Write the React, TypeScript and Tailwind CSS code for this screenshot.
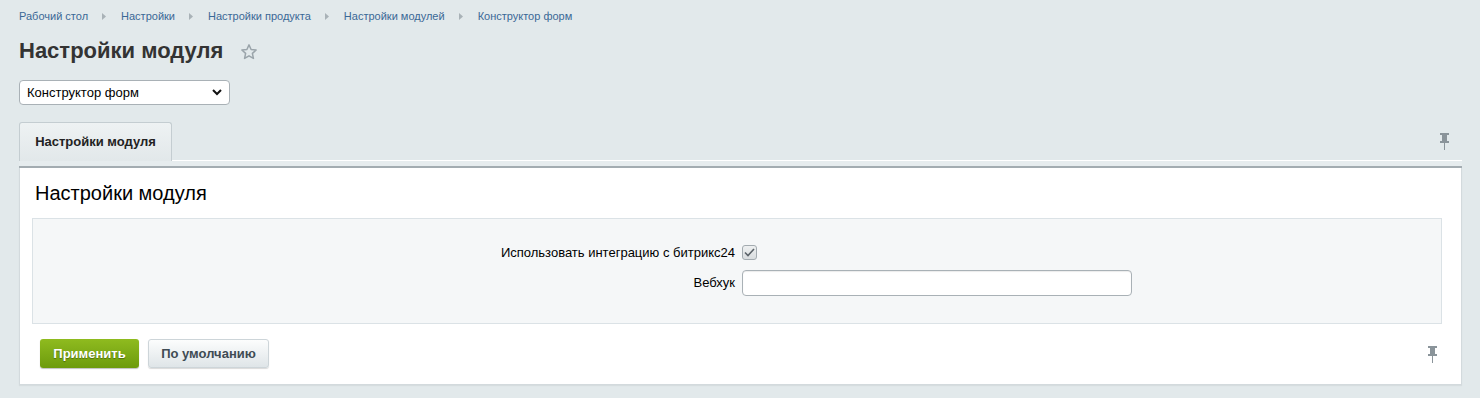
import React from "react";

const font = { fontFamily: '"Liberation Sans", Arial, sans-serif' };

function Pin() {
    return (
        <svg width="11" height="17" viewBox="0 0 11 17">
            <rect x="1" y="0" width="9" height="2" fill="#8a949a" />
            <rect x="3" y="2" width="5" height="6" fill="#8a949a" />
            <rect x="1" y="8" width="9" height="2" fill="#8a949a" />
            <rect x="5" y="10" width="1" height="7" fill="#8a949a" />
        </svg>
    );
}

function Crumb({ text, last }: { text: string; last?: boolean }) {
    return (
        <>
            <span className="text-[11px] text-[#3a6896]">{text}</span>
            {!last && (
                <svg width="4" height="7" viewBox="0 0 4 7" className="ml-[14px] mr-[15px]">
                    <path d="M0 0 L4 3.5 L0 7 Z" fill="#a9b2b7" />
                </svg>
            )}
        </>
    );
}

export default function App() {
    const crumbs = ["Рабочий стол", "Настройки", "Настройки продукта", "Настройки модулей", "Конструктор форм"];

    return (
        <div className="min-h-[398px] bg-[#e2e9eb] pl-[19px] pr-[18px] pt-[9px] text-[#333]" style={font}>
            {/* breadcrumbs */}
            <div className="flex items-center h-[14px]">
                {crumbs.map((c, i) => (
                    <Crumb key={c} text={c} last={i === crumbs.length - 1} />
                ))}
            </div>

            <div className="flex items-center mt-[15px] h-[25px]">
                <h1 className="text-[22px] font-bold text-[#333] leading-[25px]">Настройки модуля</h1>
                <svg width="18" height="18" viewBox="0 0 24 24" className="ml-[17px] mt-[2px]">
                    <path d="M12 2.5 L14.8 8.7 L21.5 9.4 L16.5 13.9 L17.9 20.5 L12 17.1 L6.1 20.5 L7.5 13.9 L2.5 9.4 L9.2 8.7 Z"
                          fill="none" stroke="#9aa4aa" strokeWidth="2" strokeLinejoin="round" />
                </svg>
            </div>

            <div className="relative mt-[17px] w-[211px] h-[25px]">
                <select className="appearance-none w-full h-full rounded-[4px] border border-[#a9b1b6] bg-white pl-[7px] text-[13px] text-black outline-none" style={font}>
                    <option>Конструктор форм</option>
                </select>
                <svg width="10" height="7" viewBox="0 0 10 7" className="absolute right-[8px] top-[9px] pointer-events-none">
                    <path d="M1 1 L5 5 L9 1" fill="none" stroke="#111" strokeWidth="2" />
                </svg>
            </div>

            {/* tabs */}
            <div className="flex items-end mt-[17px]">
                <div className="h-[39px] w-[153px] rounded-t-[3px] border border-b-0 border-[#c4cdd1] bg-gradient-to-b from-[#eef2f3] to-[#e2e8ea] flex items-center justify-center text-[13px] font-bold text-[#222]">
                    Настройки модуля
                </div>
                <div className="flex-1 h-[39px] border-b border-white flex items-center justify-end pr-[12px]">
                    <Pin />
                </div>
            </div>
            <div className="h-[7px] bg-[#e6ecee] border-b-2 border-[#a3acb1]"></div>

            {/* panel */}
            <div className="bg-white border border-t-0 border-[#d3dadd] pl-[12px] pr-[19px] pb-[16px] shadow-[0_1px_1px_rgba(0,0,0,0.05)]">
                <div className="pt-[13px] pl-[3px] text-[20px] leading-[24px] text-black">Настройки модуля</div>

                <div className="mt-[13px] bg-[#f5f7f8] border border-[#dbe2e6] pt-[24px] pb-[27px]">
                    <div className="grid grid-cols-2 items-center h-[15px]">
                        <div className="text-right pr-[2px] text-[13px] text-black">Использовать интеграцию с битрикс24</div>
                        <div className="pl-[5px]">
                            <div className="w-[15px] h-[15px] rounded-[3px] border border-[#a3abb0] bg-gradient-to-b from-[#eef0f1] to-[#d9dddf] flex items-center justify-center">
                                <svg width="11" height="9" viewBox="0 0 11 9">
                                    <path d="M1 4.5 L4 7.5 L10 1" fill="none" stroke="#5a6268" strokeWidth="1.6" />
                                </svg>
                            </div>
                        </div>
                    </div>
                    <div className="grid grid-cols-2 items-center mt-[12px]">
                        <div className="text-right pr-[2px] text-[13px] text-black">Вебхук</div>
                        <div className="pl-[5px]">
                            <input className="w-[390px] h-[26px] rounded-[4px] border border-[#a9b1b6] bg-white shadow-[inset_0_1px_1px_rgba(0,0,0,0.08)] outline-none" />
                        </div>
                    </div>
                </div>

                <div className="flex items-center mt-[15px] pl-[8px]">
                    <button className="h-[29px] w-[99px] rounded-[3px] bg-gradient-to-b from-[#8fbb1f] to-[#6d9b0c] text-[13px] font-bold text-white shadow-[0_1px_1px_rgba(0,0,0,0.25)] [text-shadow:0_1px_1px_rgba(0,0,0,0.35)]" style={font}>
                        Применить
                    </button>
                    <button className="ml-[9px] h-[29px] w-[121px] rounded-[3px] border border-[#cdd5d9] bg-gradient-to-b from-[#fcfdfd] to-[#dfe5e8] text-[13px] font-bold text-[#3f4b54] shadow-[0_1px_1px_rgba(0,0,0,0.15)]" style={font}>
                        По умолчанию
                    </button>
                    <div className="flex-1 flex justify-end pr-[4px] mt-[2px]">
                        <Pin />
                    </div>
                </div>
            </div>
        </div>
    );
}
